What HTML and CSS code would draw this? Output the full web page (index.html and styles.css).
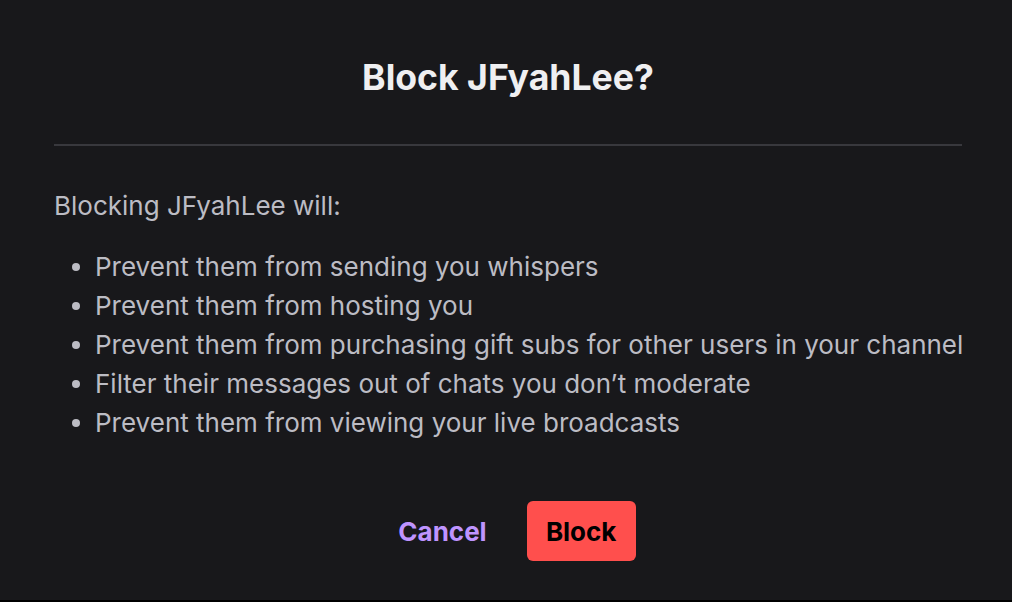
FILE: index.html
```html
<!DOCTYPE html>
<html>
<head>
<meta charset="utf-8">
<link rel="stylesheet" href="styles.css">
</head>
<body>
<div class="modal">
  <h1 class="title">Block JFyahLee?</h1>
  <hr class="divider">
  <p class="lead">Blocking JFyahLee will:</p>
  <ul class="list">
    <li>Prevent them from sending you whispers</li>
    <li>Prevent them from hosting you</li>
    <li>Prevent them from purchasing gift subs for other users in your channel</li>
    <li>Filter their messages out of chats you don’t moderate</li>
    <li>Prevent them from viewing your live broadcasts</li>
  </ul>
  <div class="actions">
    <button class="btn-cancel">Cancel</button>
    <button class="btn-block">Block</button>
  </div>
</div>
</body>
</html>
```

FILE: styles.css
```css
html, body {
  margin: 0;
  padding: 0;
  height: 100%;
}
body {
  background: #18181b;
  font-family: Inter, "Noto Sans", sans-serif;
  color: #bcbcc4;
  border-bottom: 2px solid #000;
  box-sizing: border-box;
}
.modal {
  padding: 0 50px 0 54px;
}
.title {
  margin: 0;
  padding: 56px 0 44px;
  text-align: center;
  font-size: 35.6px;
  font-weight: 700;
  color: #efeff1;
  line-height: 44px;
}
.divider {
  margin: 0;
  border: 0;
  height: 2px;
  background: #38383d;
}
.lead {
  margin: 44px 0 0;
  font-size: 26px;
  line-height: 32px;
}
.list {
  margin: 25px 0 0;
  padding: 0;
  list-style: none;
  font-size: 26px;
  line-height: 39px;
}
.list li {
  display: flex;
  align-items: center;
  gap: 15px;
  white-space: nowrap;
}
.list li::before {
  content: "";
  flex: none;
  width: 8px;
  height: 8px;
  margin-left: 18px;
  border-radius: 50%;
  background: #bcbcc4;
}
.actions {
  display: flex;
  justify-content: center;
  align-items: center;
  gap: 20px;
  margin-top: 59px;
  padding-right: 2px;
}
.btn-cancel {
  background: none;
  border: 0;
  padding: 0 20px;
  height: 60px;
  font-family: inherit;
  font-size: 26px;
  font-weight: 700;
  color: #bf94ff;
}
.btn-block {
  background: #ff4f4d;
  border: 0;
  border-radius: 6px;
  width: 109px;
  height: 60px;
  padding: 0;
  font-family: inherit;
  font-size: 26px;
  font-weight: 700;
  color: #000;
}
```
